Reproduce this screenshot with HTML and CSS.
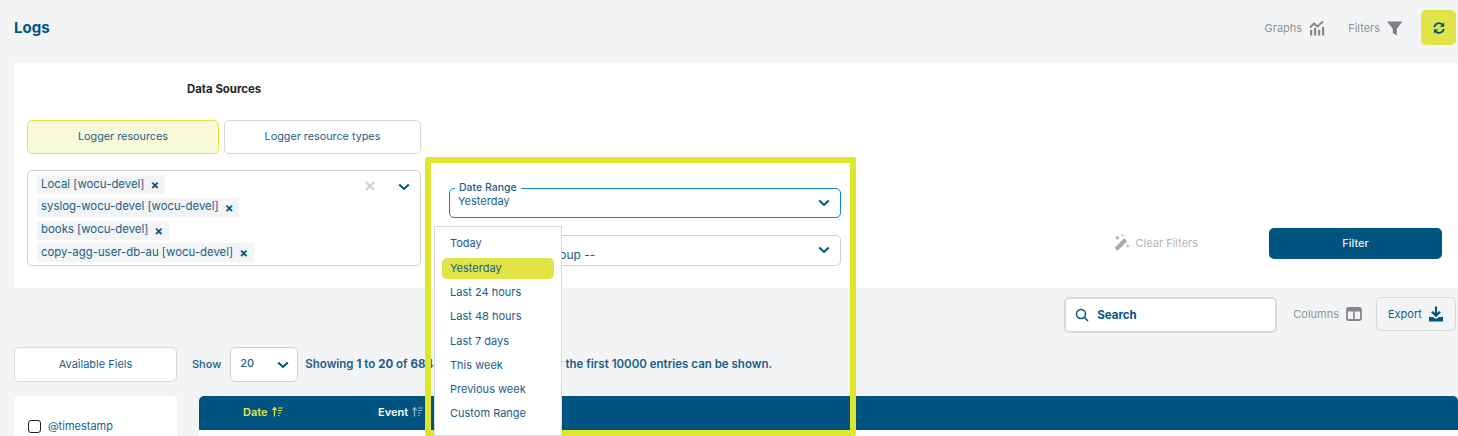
FILE: index.html
```
<!DOCTYPE html>
<html lang="en">
<head>
<meta charset="utf-8">
<title>Logs</title>
<link rel="stylesheet" href="styles.css">
</head>
<body>
<div class="page">
  <header class="topbar">
    <h1 class="title">Logs</h1>
    <div class="top-actions">
      <span class="top-action">Graphs
        <svg class="ic16" viewBox="0 0 16 16"><path d="M1 7.500L5 3.500l3.500 3L14 1.500" fill="none" stroke="#85888b" stroke-width="1.800"/><path d="M1 10h2.200v5.500H1zM5 8h2.200v7.500H5zM9 10h2.200v5.500H9zM13 7h2.200v8.500H13z" fill="#85888b"/></svg>
      </span>
      <span class="top-action filters">Filters
        <svg class="ic16" viewBox="0 0 16 16"><path d="M0 1.500h15.500L9.800 8.800V15.500L5.800 13V8.800z" fill="#7d7f82"/></svg>
      </span>
      <button class="refresh" type="button" aria-label="Refresh">
        <svg viewBox="0 0 14 14" class="ic12"><path d="M1.500 6A5.500 5.500 0 0 1 11 3.200M12.500 8A5.500 5.500 0 0 1 3 10.800" fill="none" stroke="#00547f" stroke-width="2.200"/><path d="M13 0.500V5.500H8zM1 13.500V8.500h5z" fill="#00547f"/></svg>
      </button>
    </div>
  </header>

  <section class="panel">
    <div class="col-sources">
      <h2 class="sources-title">Data Sources</h2>
      <div class="tabs">
        <button class="tab active" type="button">Logger resources</button>
        <button class="tab second" type="button">Logger resource types</button>
      </div>
      <div class="multi">
        <div class="chips">
          <span class="chip">Local [wocu-devel]<b class="chip-x">×</b></span>
          <span class="chip">syslog-wocu-devel [wocu-devel]<b class="chip-x">×</b></span>
          <span class="chip">books [wocu-devel]<b class="chip-x">×</b></span>
          <span class="chip">copy-agg-user-db-au [wocu-devel]<b class="chip-x">×</b></span>
        </div>
        <svg class="clear-x" viewBox="0 0 10 10"><path d="M1 1l8 8M9 1l-8 8" stroke="#cfd0d2" stroke-width="2"/></svg>
        <svg class="chev multi-chev" viewBox="0 0 12 8"><path d="M1.200 1.500L6 6l4.800-4.500" fill="none" stroke="#00547f" stroke-width="2"/></svg>
      </div>
    </div>
    <div class="col-date">
      <div class="select focus">
        <span class="select-label">Date Range</span>
        <span class="select-value top">Yesterday</span>
        <svg class="chev" viewBox="0 0 12 8"><path d="M1.200 1.500L6 6l4.800-4.500" fill="none" stroke="#00547f" stroke-width="2"/></svg>
      </div>
      <div class="select group">
        <span class="select-value low">-- Select a Log Group --</span>
        <svg class="chev" viewBox="0 0 12 8"><path d="M1.200 1.500L6 6l4.800-4.500" fill="none" stroke="#00547f" stroke-width="2"/></svg>
      </div>
    </div>
    <div class="col-actions">
      <span class="clear">
        <svg class="ic17" viewBox="0 0 16 16"><path d="M1.500 13L10.500 4l2.800 2.800L4.300 15.800z" fill="#a9acaf"/><path d="M4 1l.7 1.800L6.500 3.500 4.700 4.200 4 6 3.300 4.200 1.500 3.500 3.300 2.800zM9 0l.4 1 1 .4-1 .4-.4 1-.4-1-1-.4 1-.4zM14 9.500l.5 1.300 1.300.5-1.300.5-.5 1.700-.5-1.700-1.300-.5 1.300-.5z" fill="#a9acaf"/></svg>
        Clear Filters
      </span>
      <button class="filter-btn" type="button">Filter</button>
    </div>
  </section>

  <div class="tools">
    <label class="search">
      <svg class="ic14" viewBox="0 0 14 14"><circle cx="6" cy="6" r="4.500" fill="none" stroke="#00547f" stroke-width="1.500"/><path d="M9.300 9.300L13 13" stroke="#00547f" stroke-width="1.500"/></svg>
      <span>Search</span>
    </label>
    <span class="columns">Columns
      <svg class="ic16" viewBox="0 0 16 16"><rect x="1" y="2" width="14" height="12" rx="1.500" fill="none" stroke="#85888b" stroke-width="1.800"/><path d="M1 3h14v2.500H1zM7.200 3h1.600v10H7.200z" fill="#85888b"/></svg>
    </span>
    <button class="export" type="button">Export
      <svg class="ic16" viewBox="0 0 16 16"><path d="M8 .5v9M4 5.800L8 9.800l4-4" fill="none" stroke="#00547f" stroke-width="2.200"/><path d="M1 11h3.800L8 13l3.200-2H15v4.500H1z" fill="#00547f"/></svg>
    </button>
  </div>

  <div class="listbar">
    <button class="fields" type="button">Available Fiels</button>
    <span class="show">Show</span>
    <div class="size">20
      <svg class="chev" viewBox="0 0 12 8"><path d="M1.200 1.500L6 6l4.800-4.500" fill="none" stroke="#00547f" stroke-width="2"/></svg>
    </div>
    <span class="showing">Showing <b>1</b> to <b>20</b> of <b>68443</b> entries, though only the first 10000 entries can be shown.</span>
  </div>

  <div class="content">
    <aside class="side">
      <label class="field"><span class="box"></span>@timestamp</label>
    </aside>
    <div class="table">
      <div class="thead">
        <span class="th date">Date
          <svg class="sort" viewBox="0 0 11 10"><path d="M2.500 9.500V1M.4 3.200L2.500 .6 4.600 3.200" fill="none" stroke="currentColor" stroke-width="1.300"/><path d="M6 1h5M6 3.500h4M6 6h3M6 8.500h1.500" stroke="currentColor" stroke-width="1.200"/></svg>
        </span>
        <span class="th event">Event
          <svg class="sort dim" viewBox="0 0 11 10"><path d="M2.500 9.500V1M.4 3.200L2.500 .6 4.600 3.200" fill="none" stroke="currentColor" stroke-width="1.300"/><path d="M6 1h5M6 3.500h4M6 6h3M6 8.500h1.500" stroke="currentColor" stroke-width="1.200"/></svg>
        </span>
      </div>
    </div>
  </div>

  <div class="highlight"></div>
  <ul class="menu">
    <li>Today</li>
    <li class="selected">Yesterday</li>
    <li>Last 24 hours</li>
    <li>Last 48 hours</li>
    <li>Last 7 days</li>
    <li>This week</li>
    <li>Previous week</li>
    <li>Custom Range</li>
  </ul>
</div>
</body>
</html>
```
FILE: styles.css
```
* { box-sizing: border-box; }
html, body { margin: 0; padding: 0; height: 100%; overflow: hidden; }
body { background: #f2f4f6; font-family: Inter, "Open Sans", sans-serif; font-size: 11px; color: #1b5e88; }
button { font: inherit; color: inherit; cursor: pointer; }
svg { display: block; flex: none; }
.ic12 { width: 12px; height: 12px; }
.ic14 { width: 14px; height: 14px; }
.ic16 { width: 16px; height: 16px; }
.ic17 { width: 17px; height: 17px; }

.page { position: relative; width: 1458px; height: 436px; overflow: hidden; }

.topbar { height: 63px; display: flex; align-items: center; justify-content: space-between; padding: 0 2px 8px 14px; }
.title { margin: 0; font-size: 15px; font-weight: 700; color: #00547f; }
.top-actions { display: flex; align-items: center; }
.top-action { display: flex; align-items: center; gap: 7px; color: #8f9499; }
.filters { margin-left: 23px; }
.refresh { width: 35px; height: 35px; margin-left: 18px; border: 0; border-radius: 5px; background: #e0e447; display: flex; align-items: center; justify-content: center; }

.panel { height: 225px; margin-left: 14px; background: #fff; display: flex; position: relative; }
.col-sources { width: 407px; padding-left: 13px; }
.sources-title { margin: 19px 0 0 160px; height: 14px; line-height: 14px; font-size: 11.400px; font-weight: 700; color: #1f2429; }
.tabs { display: flex; gap: 5px; margin-top: 24px; }
.tab { height: 34px; border: 1px solid #d5d7d9; border-radius: 5px; background: #fff; padding: 0 0 2px; font-size: 10.800px; }
.tab.active { width: 192px; background: #f8f9d9; border-color: #e0e447; }
.tab.second { width: 197px; }
.multi { position: relative; width: 394px; height: 96px; margin-top: 16px; border: 1px solid #cfd1d3; border-radius: 5px; padding: 4px 9px; }
.chips { display: flex; flex-direction: column; align-items: flex-start; gap: 3.800px; }
.chip { height: 19px; padding: 0 6px 2px 4px; background: #f2f4f6; border-radius: 2px; display: inline-flex; align-items: center; font-size: 11.400px; }
.chip-x { margin-left: 6px; font-size: 13px; line-height: 1; color: #00547f; position: relative; top: 2px; }
.clear-x { position: absolute; top: 10px; right: 45px; width: 10px; height: 10px; }
.chev { width: 12px; height: 8px; }
.multi-chev { position: absolute; top: 12px; right: 10px; }

.col-date { width: 392px; margin-left: 28px; padding-top: 125px; }
.select { position: relative; width: 392px; border: 1px solid #cfd1d3; border-radius: 5px; height: 31px; display: flex; align-items: center; justify-content: space-between; padding: 0 10px 0 8px; background: #fff; }
.select.focus { height: 30px; border-color: #0a84e0; }
.select-label { position: absolute; left: 5px; top: -7px; background: #fff; padding: 0 4px; height: 12px; line-height: 12px; font-size: 10.500px; font-weight: 500; }
.select-value.top { position: relative; top: -2px; }
.select-value.low { padding-top: 7px; font-size: 12px; }
.select.group .chev { position: relative; top: -1px; }
.select.group { margin-top: 17px; }

.col-actions { flex: 1; display: flex; justify-content: flex-end; align-items: flex-start; padding: 165px 16px 0 0; }
.clear { display: flex; align-items: center; gap: 6px; color: #b3b6b9; height: 31px; padding-bottom: 2px; margin-right: 71px; }
.filter-btn { width: 173px; height: 31px; border: 0; border-radius: 5px; background: #00547f; color: #e8eef2; font-weight: 500; padding: 0 0 2px; }

.tools { height: 59px; display: flex; align-items: flex-start; justify-content: flex-end; padding: 9px 2px 0 0; }
.search { width: 213px; height: 36px; border: 2px solid #d8dadc; border-radius: 5px; background: #fff; display: flex; align-items: center; gap: 8px; padding-left: 9px; font-weight: 700; font-size: 11.500px; color: #00547f; }
.columns { display: flex; align-items: center; gap: 7px; height: 34px; margin-left: 16px; margin-right: -1px; color: #8f9499; }
.export { display: flex; align-items: center; gap: 6px; width: 80px; height: 34px; margin-left: 15px; padding: 0 0 0 11px; background: transparent; border: 1px solid #d8dadc; border-radius: 5px; }

.listbar { height: 49px; padding-left: 14px; display: flex; align-items: flex-start; }
.fields { width: 163px; height: 35px; border: 1px solid #d8dadc; border-radius: 5px; background: #fff; padding: 0 0 2px; }
.show { margin-left: 15px; height: 35px; line-height: 35px; font-weight: 500; }
.size { width: 68px; height: 35px; margin-left: 9px; border: 1px solid #cfd1d3; border-radius: 5px; background: #fff; display: flex; align-items: center; justify-content: space-between; padding: 0 8px 4px 9px; font-weight: 500; }
.size .chev { position: relative; top: 2px; }
.showing { margin-left: 7px; height: 35px; line-height: 35px; font-weight: 600; font-size: 11.500px; white-space: nowrap; }
.showing b { font-weight: 700; }

.content { display: flex; align-items: flex-start; padding-left: 14px; }
.side { width: 163px; height: 60px; background: #fff; border-radius: 5px; padding: 22px 0 0 14px; }
.field { display: flex; align-items: center; gap: 7px; height: 16px; }
.box { width: 13px; height: 13px; border: 1px solid #1d1f22; border-radius: 3px; background: #fff; }
.table { flex: 1; margin-left: 22px; height: 60px; background: #fff; border-radius: 5px 5px 0 0; overflow: hidden; }
.thead { height: 34px; background: #00547f; display: flex; align-items: center; padding: 0 0 2px 44px; font-weight: 600; color: #fff; }
.th { display: flex; align-items: center; gap: 4px; }
.th.date { width: 135px; color: #e0e447; }
.sort { width: 11px; height: 10px; }
.sort.dim { opacity: .55; }

.highlight { position: absolute; left: 425px; top: 157px; width: 431px; height: 279px; border: 6px solid #e0e630; border-radius: 2px; }
.menu { position: absolute; left: 434px; top: 226px; width: 128px; height: 210px; margin: 0; padding: 4px 7px; list-style: none; background: #fff; border: 1px solid #d8dadc; }
.menu li { height: 24.200px; line-height: 24px; padding-left: 8px; border-radius: 5px; }
.menu li.selected { height: 21px; line-height: 21px; margin: 3px 0 1px; background: #e0e447; }
```
